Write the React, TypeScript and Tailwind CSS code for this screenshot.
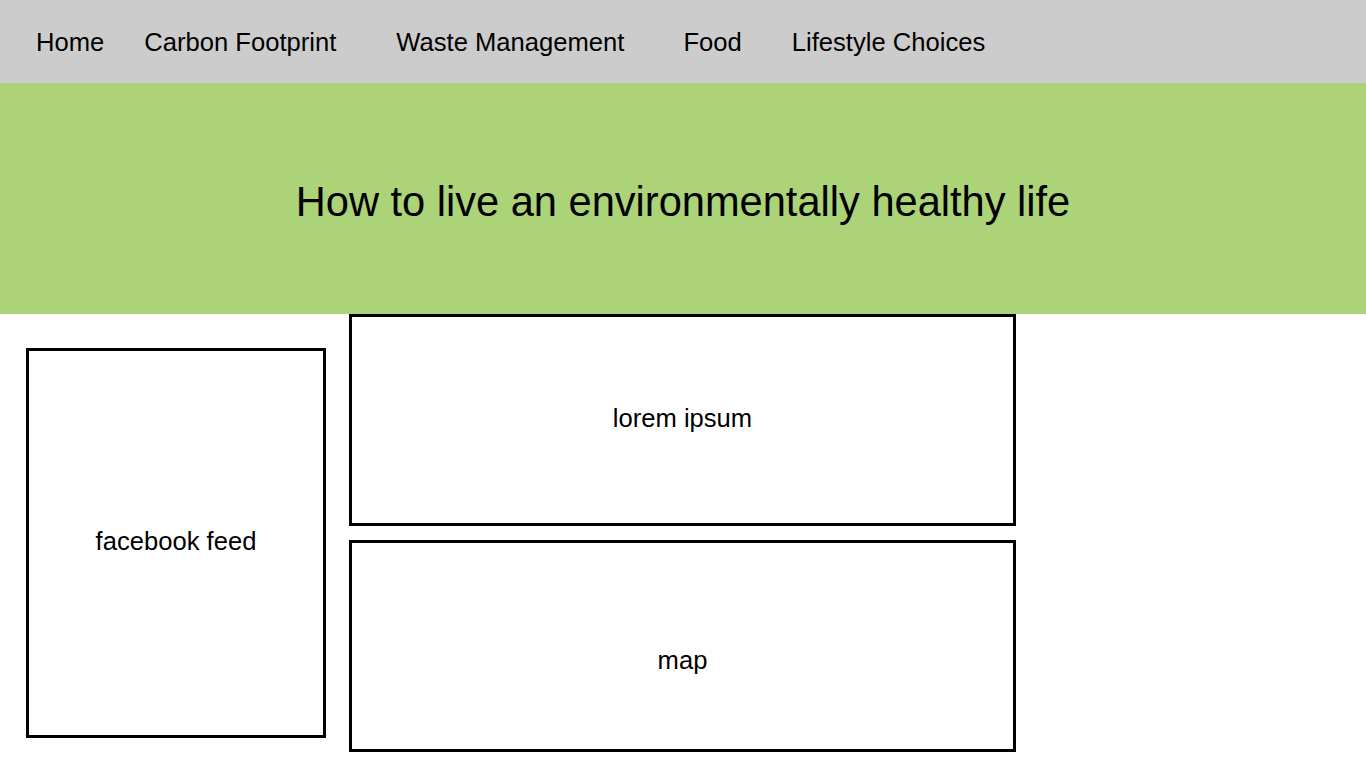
export default function App() {
  return (
    <div className="min-h-screen bg-white text-black font-['Liberation_Sans',Arial,sans-serif]">
      <nav className="flex h-[83px] items-center bg-[#cccccc] pl-[36px] pt-[2px] text-[25.6px]">
        <a className="mr-[40px]">Home</a>
        <a className="mr-[60px]">Carbon Footprint</a>
        <a className="mr-[59px]">Waste Management</a>
        <a className="mr-[50px]">Food</a>
        <a>Lifestyle Choices</a>
      </nav>

      <header className="flex h-[231px] items-center justify-center bg-[#acd378] pt-[8px]">
        <h1 className="text-[41.6px]">How to live an environmentally healthy life</h1>
      </header>

      <main className="flex items-start gap-[23px] pl-[26px]">
        <div className="mt-[34px] flex h-[390px] w-[300px] items-center justify-center border-[3px] border-black pb-[4px] text-[25.6px]">
          facebook feed
        </div>
        <div className="flex flex-col gap-[14px]">
          <div className="flex h-[212px] w-[667px] justify-center border-[3px] border-black pt-[82px] text-[25.6px]">
            lorem ipsum
          </div>
          <div className="flex h-[212px] w-[667px] justify-center border-[3px] border-black pt-[98px] text-[25.6px]">
            map
          </div>
        </div>
      </main>
    </div>
  );
}
